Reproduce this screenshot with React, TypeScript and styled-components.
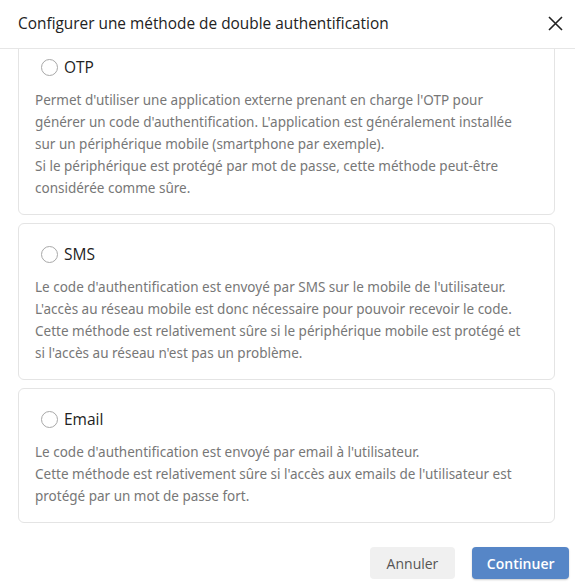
import React, { useEffect, useRef } from "react"
import styled, { createGlobalStyle } from "styled-components"

const GlobalStyle = createGlobalStyle`
  html, body {
    margin: 0;
    padding: 0;
    background: #ffffff;
  }
  * {
    box-sizing: border-box;
  }
`

const Dialog = styled.div`
  width: 575px;
  height: 584px;
  display: flex;
  flex-direction: column;
  background: #fff;
  font-family: "Open Sans", "Noto Sans", sans-serif;
  overflow: hidden;
`

const Header = styled.div`
  height: 49px;
  flex: none;
  display: flex;
  align-items: center;
  justify-content: space-between;
  padding: 0 8px 1px 18px;
  border-bottom: 1px solid #e6e6e6;
`

const Title = styled.h1`
  margin: 0;
  font-size: 15.4px;
  font-weight: 400;
  color: #222;
`

const CloseButton = styled.button`
  width: 24px;
  height: 24px;
  padding: 0;
  border: none;
  background: none;
  display: flex;
  align-items: center;
  justify-content: center;
  color: #222;
  cursor: pointer;
`

const Body = styled.div`
  height: 482px;
  flex: none;
  overflow-y: auto;
  padding: 0 20px 8px 18px;
  display: flex;
  flex-direction: column;
  gap: 8px;
  scrollbar-width: none;
  &::-webkit-scrollbar {
    display: none;
  }
`

const Card = styled.label`
  flex: none;
  display: flex;
  flex-direction: column;
  gap: 10px;
  padding: 18px 16px 15px 16px;
  border: 1px solid #e4e4e4;
  border-radius: 6px;
  cursor: pointer;
`

const OptionRow = styled.div`
  height: 24px;
  display: flex;
  align-items: center;
  gap: 6px;
  padding-left: 6px;
`

const Radio = styled.input.attrs({ type: "radio" })`
  appearance: none;
  width: 17px;
  height: 17px;
  margin: 0;
  border: 1px solid #a8a8a8;
  border-radius: 50%;
  background: #fff;
  &:checked {
    border: 5px solid #5585c6;
  }
`

const OptionLabel = styled.span`
  font-size: 15.5px;
  color: #222;
`

const Description = styled.p`
  margin: 0;
  font-family: "Noto Sans", sans-serif;
  font-size: 13.5px;
  line-height: 22px;
  color: #777;
  white-space: pre-line;
`

const Footer = styled.div`
  flex: 1;
  display: flex;
  justify-content: flex-end;
  align-items: flex-start;
  gap: 17px;
  padding: 16px 6px 0 0;
`

const Button = styled.button<{ $primary?: boolean }>`
  height: 32px;
  padding: 0 ${(p) => (p.$primary ? "14.5px" : "17px")};
  border: none;
  border-radius: 4px;
  font-family: "Open Sans", "Noto Sans", sans-serif;
  font-size: 14px;
  font-weight: ${(p) => (p.$primary ? 600 : 400)};
  color: ${(p) => (p.$primary ? "#fff" : "#555")};
  background: ${(p) => (p.$primary ? "#5686c7" : "#f0f0f0")};
  box-shadow: ${(p) => (p.$primary ? "0 1px 2px rgba(0,0,0,0.2)" : "none")};
  cursor: pointer;
`

const methods = [
  {
    id: "otp",
    label: "OTP",
    text:
      "Permet d'utiliser une application externe prenant en charge l'OTP pour\ngénérer un code d'authentification. L'application est généralement installée\nsur un périphérique mobile (smartphone par exemple).\nSi le périphérique est protégé par mot de passe, cette méthode peut-être\nconsidérée comme sûre.",
  },
  {
    id: "sms",
    label: "SMS",
    text:
      "Le code d'authentification est envoyé par SMS sur le mobile de l'utilisateur.\nL'accès au réseau mobile est donc nécessaire pour pouvoir recevoir le code.\nCette méthode est relativement sûre si le périphérique mobile est protégé et\nsi l'accès au réseau n'est pas un problème.",
  },
  {
    id: "email",
    label: "Email",
    text:
      "Le code d'authentification est envoyé par email à l'utilisateur.\nCette méthode est relativement sûre si l'accès aux emails de l'utilisateur est\nprotégé par un mot de passe fort.",
  },
]

export default function App() {
  const bodyRef = useRef<HTMLDivElement>(null)

  // the list is shown scrolled to its end, as in the reference
  useEffect(() => {
    const el = bodyRef.current
    if (el) el.scrollTop = el.scrollHeight
  }, [])

  return (
    <>
      <GlobalStyle />
      <Dialog>
        <Header>
          <Title>Configurer une méthode de double authentification</Title>
          <CloseButton aria-label="Fermer">
            <svg width="15" height="15" viewBox="0 0 15 15">
              <path d="M1 1L14 14M14 1L1 14" stroke="currentColor" strokeWidth="1.6" />
            </svg>
          </CloseButton>
        </Header>
        <Body ref={bodyRef}>
          {methods.map((m) => (
            <Card key={m.id}>
              <OptionRow>
                <Radio name="method" value={m.id} />
                <OptionLabel>{m.label}</OptionLabel>
              </OptionRow>
              <Description>{m.text}</Description>
            </Card>
          ))}
        </Body>
        <Footer>
          <Button>Annuler</Button>
          <Button $primary>Continuer</Button>
        </Footer>
      </Dialog>
    </>
  )
}
